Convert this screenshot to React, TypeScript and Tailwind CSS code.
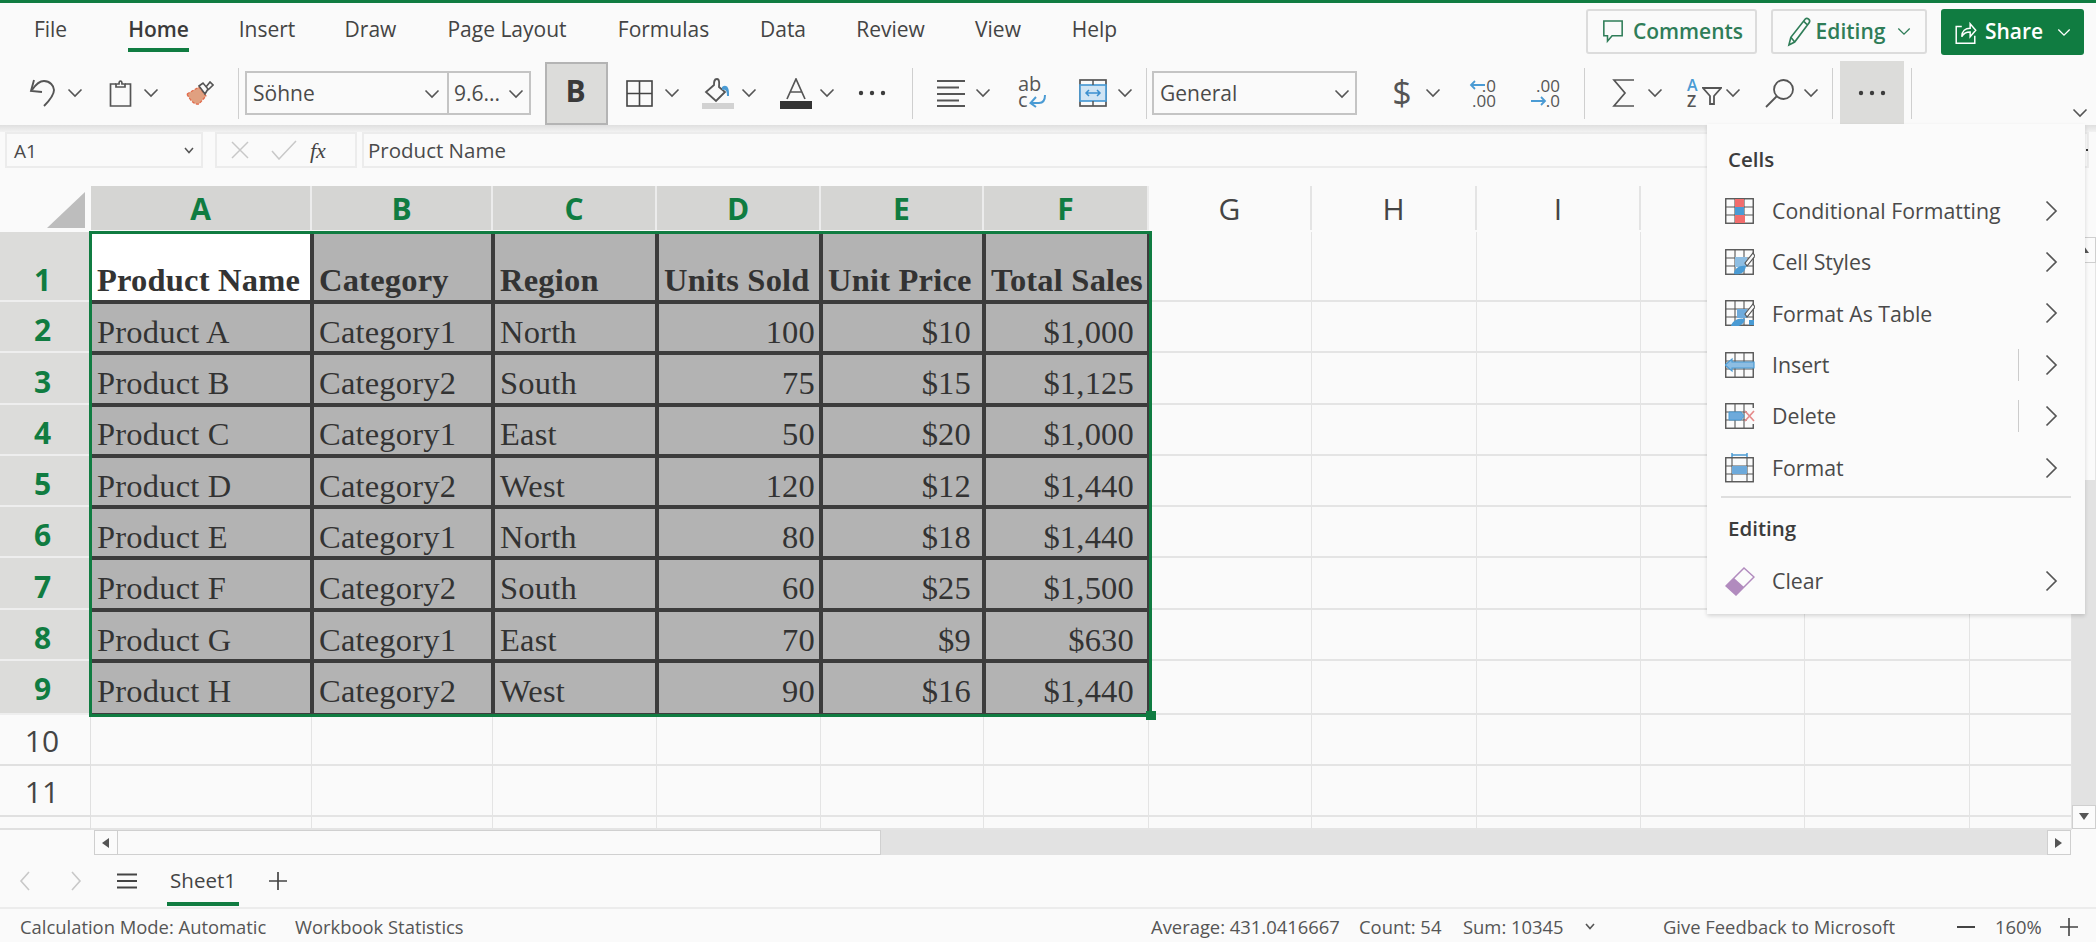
import { Fragment } from 'react';

const tabs = [
  { label: 'File', w: 'w-[84px] mr-[10px]' },
  { label: 'Home', w: 'w-[112px]', active: true },
  { label: 'Insert', w: 'w-[105px]' },
  { label: 'Draw', w: 'w-[102px]' },
  { label: 'Page Layout', w: 'w-[171px]' },
  { label: 'Formulas', w: 'w-[142px]' },
  { label: 'Data', w: 'w-[97px]' },
  { label: 'Review', w: 'w-[118px]' },
  { label: 'View', w: 'w-[97px]' },
  { label: 'Help', w: 'w-[96px]' },
];

const header = ['Product Name', 'Category', 'Region', 'Units Sold', 'Unit Price', 'Total Sales'];
const rows = [
  ['Product A', 'Category1', 'North', '100', '$10', '$1,000'],
  ['Product B', 'Category2', 'South', '75', '$15', '$1,125'],
  ['Product C', 'Category1', 'East', '50', '$20', '$1,000'],
  ['Product D', 'Category2', 'West', '120', '$12', '$1,440'],
  ['Product E', 'Category1', 'North', '80', '$18', '$1,440'],
  ['Product F', 'Category2', 'South', '60', '$25', '$1,500'],
  ['Product G', 'Category1', 'East', '70', '$9', '$630'],
  ['Product H', 'Category2', 'West', '90', '$16', '$1,440'],
];
const colLetters = ['A', 'B', 'C', 'D', 'E', 'F', 'G', 'H', 'I', 'J', 'K', 'L'];

function Chev({ className = '' }: { className?: string }) {
  return (
    <svg viewBox="0 0 16 10" className={`w-[16px] h-[10px] shrink-0 ${className}`} fill="none" stroke="#555" strokeWidth="1.6">
      <polyline points="1.5,1.5 8,8 14.5,1.5" />
    </svg>
  );
}

function Sep({ className = '' }: { className?: string }) {
  return <div className={`w-px h-[51px] bg-[#cfcfcf] shrink-0 ${className}`} />;
}

function Dots({ className = '' }: { className?: string }) {
  return (
    <svg viewBox="0 0 28 6" className={`w-[28px] h-[6px] shrink-0 ${className}`} fill="#3c3c3c">
      <circle cx="3" cy="3" r="2.2" />
      <circle cx="14" cy="3" r="2.2" />
      <circle cx="25" cy="3" r="2.2" />
    </svg>
  );
}

function MenuGrid({ children }: { children?: React.ReactNode }) {
  return (
    <svg viewBox="0 0 30 26" className="w-[30px] h-[26px] shrink-0" fill="none">
      <rect x="0.75" y="0.75" width="27.5" height="24.5" stroke="#555" strokeWidth="1.4" />
      <path d="M10 1v24M19 1v24M1 9h27M1 17h27" stroke="#555" strokeWidth="1.1" />
      {children}
    </svg>
  );
}

function MenuItem({ icon, label, split }: { icon: React.ReactNode; label: string; split?: boolean }) {
  return (
    <div className="flex items-center h-[51.4px] pl-[18px]">
      <div className="w-[30px] flex justify-center">{icon}</div>
      <span className="ml-[17px] text-[#4a4a4a]">{label}</span>
      {split && <div className="ml-auto w-px h-[32px] bg-[#cccccc]" />}
      <svg viewBox="0 0 13 22" className={`w-[13px] h-[22px] mr-[27px] ${split ? 'ml-[26px]' : 'ml-auto'}`} fill="none" stroke="#555" strokeWidth="1.7">
        <polyline points="1.5,1.5 11,11 1.5,20.5" />
      </svg>
    </div>
  );
}

function ScrollBtn({ dir, className = '' }: { dir: 'up' | 'down' | 'left' | 'right'; className?: string }) {
  const points = { up: '1,9 6,2 11,9', down: '1,2 6,9 11,2', left: '9,1 2,6 9,11', right: '2,1 9,6 2,11' }[dir];
  return (
    <div className={`flex items-center justify-center bg-[#fbfbfb] border border-[#cfcfcf] shrink-0 ${className}`}>
      <svg viewBox="0 0 12 12" className="w-[12px] h-[12px]" fill="#555">
        <polygon points={points} />
      </svg>
    </div>
  );
}

export default function App() {
  return (
    <div className="relative w-[2096px] h-[942px] overflow-hidden flex flex-col bg-[#fafafa] text-[#444] font-['Open_Sans',sans-serif]">
      <div className="h-[3px] bg-[#107c41] shrink-0" />

      {/* tab row */}
      <div className="h-[58px] flex items-start pl-[8.5px] shrink-0 text-[21px]">
        {tabs.map((t) => (
          <div key={t.label} className={`${t.w} flex justify-center`}>
            <span className={`h-[49px] leading-[52px] border-b-[4px] whitespace-nowrap ${t.active ? 'border-[#107c41] font-semibold text-[#3a3a3a]' : 'border-transparent'}`}>
              {t.label}
            </span>
          </div>
        ))}
        <div className="ml-auto mr-[12px] mt-[6px] flex gap-[14px]">
          <div className="h-[45px] w-[171px] flex items-center justify-center gap-[9px] pl-[2px] border-2 border-[#dcdcdc] rounded-[3px] text-[#2f7d58] font-semibold">
            <svg viewBox="0 0 24 28" className="w-[22px] h-[26px]" fill="none" stroke="#2f7d58" strokeWidth="1.7">
              <path d="M2 2h20v16H11l-5 6v-6H2z" />
            </svg>
            Comments
          </div>
          <div className="h-[45px] w-[156px] flex items-center justify-center gap-[4px] border-2 border-[#dcdcdc] rounded-[3px] text-[#2f7d58] font-semibold">
            <svg viewBox="0 0 26 32" className="w-[25px] h-[31px]" fill="none" stroke="#2f7d58" strokeWidth="1.7">
              <path d="M2 30l2-8L19 3c2-2 6 1 4 4L8 27z M4 22l4 5M17 5l4 4" />
            </svg>
            Editing
            <svg viewBox="0 0 16 10" className="w-[14px] h-[9px] ml-[8px]" fill="none" stroke="#2f7d58" strokeWidth="1.5">
              <polyline points="1.5,1.5 8,8 14.5,1.5" />
            </svg>
          </div>
          <div className="h-[46px] w-[143px] flex items-center justify-center gap-[8px] rounded-[3px] bg-[#107c41] text-white font-semibold">
            <svg viewBox="0 0 24 28" className="w-[23px] h-[26px]" fill="none" stroke="#fff" strokeWidth="1.6">
              <path d="M8 8H2v18h20v-8M8 19c0-6 4-9 9-9V5l6 7-6 7v-5c-4 0-7 1-9 5z" />
            </svg>
            Share
            <svg viewBox="0 0 16 10" className="w-[14px] h-[9px] ml-[6px]" fill="none" stroke="#fff" strokeWidth="1.5">
              <polyline points="1.5,1.5 8,8 14.5,1.5" />
            </svg>
          </div>
        </div>
      </div>

      {/* toolbar */}
      <div className="h-[64px] flex items-center pl-[29px] shrink-0 text-[21px]">
        <svg viewBox="0 0 28 30" className="w-[28px] h-[30px] shrink-0" fill="none" stroke="#555" strokeWidth="1.9">
          <path d="M5 2L2 13l11 1" />
          <path d="M3 12C7 6 11 3 15 3c6 0 10 5 10 9 0 5-5 11-10 16" />
        </svg>
        <Chev className="ml-[10px]" />
        <svg viewBox="0 0 23 28" className="w-[23px] h-[28px] ml-[26px] shrink-0" fill="none" stroke="#555" strokeWidth="1.7">
          <path d="M7 5H1.5v22h20V5H16" />
          <path d="M7 8V5h3c0-4 3-4 3 0h3v3z" />
        </svg>
        <Chev className="ml-[11px]" />
        <svg viewBox="0 0 28 24" className="w-[28px] h-[24px] ml-[27px] shrink-0">
          <path d="M1 13l12-7 7 9-7 8c-5 1-9-4-12-10z" fill="#e0a080" stroke="#e2694a" strokeWidth="1.3" strokeDasharray="3 1.5" />
          <path d="M13 5l4-3 5 6-3 5zM20 6l4-5 3 3-5 5" fill="#fafafa" stroke="#555" strokeWidth="1.6" />
        </svg>
        <Sep className="ml-[24px]" />
        <div className="ml-[6px] flex h-[44px] border-2 border-[#c4c4c4] shrink-0 text-[#4a4a4a]">
          <div className="w-[202px] flex items-center pl-[6px] pr-[7px] pt-[2px] border-r-2 border-[#c4c4c4]">
            Söhne
            <Chev className="ml-auto" />
          </div>
          <div className="w-[80px] flex items-center pl-[5px] pr-[5px] pt-[2px]">
            9.6...
            <Chev className="ml-auto" />
          </div>
        </div>
        <div className="ml-[14px] w-[63px] h-[63px] flex items-center justify-center pb-[5px] pr-[2px] bg-[#dcdcda] border-2 border-[#b4b4b4] text-[30px] font-bold text-[#3a3a3a] shrink-0">
          B
        </div>
        <svg viewBox="0 0 27 27" className="w-[27px] h-[27px] ml-[18px] shrink-0" fill="none" stroke="#444" strokeWidth="1.6">
          <rect x="1" y="1" width="25" height="25" />
          <path d="M13.5 1v25M1 13.5h25" />
        </svg>
        <Chev className="ml-[11px]" />
        <svg viewBox="0 0 32 31" className="w-[32px] h-[31px] ml-[22px] shrink-0">
          <path d="M15 1c3 0 2 6 2 8l6 5-9 9-10-9 8-7c0-3 0-6 3-6z" fill="none" stroke="#555" strokeWidth="1.8" />
          <path d="M20 9c4-3 7 0 7 6v3h-2c0-5-1-7-5-6z" fill="#4a9bd4" />
          <rect x="0" y="25" width="32" height="6" fill="#d2d2d2" />
        </svg>
        <Chev className="ml-[7px]" />
        <svg viewBox="0 0 32 31" className="w-[32px] h-[31px] ml-[23px] shrink-0">
          <path d="M7 21L16 1l9 20M10 14h12" fill="none" stroke="#555" strokeWidth="1.7" />
          <rect x="0" y="23" width="32" height="8" fill="#333" />
        </svg>
        <Chev className="ml-[7px]" />
        <Dots className="ml-[23px]" />
        <Sep className="ml-[26px]" />
        <svg viewBox="0 0 28 28" className="w-[28px] h-[28px] ml-[24px] shrink-0" fill="none" stroke="#555" strokeWidth="2">
          <path d="M0 2h28M0 8.5h22M0 15h28M0 21.5h22M0 27h28" />
        </svg>
        <Chev className="ml-[10px]" />
        <div className="ml-[27px] w-[28px] h-[34px] relative shrink-0 leading-[16px] text-[20px] text-[#555]">
          <div>ab</div>
          <div>c</div>
          <svg viewBox="0 0 18 14" className="absolute left-[11px] top-[18px] w-[18px] h-[14px]" fill="none" stroke="#4a9bd4" strokeWidth="2">
            <path d="M16 1c0 6-3 8-6 8H2M7 3L1.5 9 7 13" />
          </svg>
        </div>
        <svg viewBox="0 0 28 28" className="w-[28px] h-[28px] ml-[33px] shrink-0" fill="none">
          <rect x="1" y="1" width="26" height="26" stroke="#555" strokeWidth="1.7" />
          <rect x="1" y="6" width="26" height="16" fill="#cfe4f4" stroke="#4a9bd4" strokeWidth="1.7" />
          <path d="M14 1v5M14 22v5" stroke="#555" strokeWidth="1.5" />
          <path d="M7 14h14M10 11l-3 3 3 3M18 11l3 3-3 3" stroke="#3b8fcf" strokeWidth="1.5" />
        </svg>
        <Chev className="ml-[10px]" />
        <Sep className="ml-[13px]" />
        <div className="ml-[5px] w-[205px] h-[44px] flex items-center pl-[6px] pr-[5px] pt-[2px] border-2 border-[#c4c4c4] shrink-0 text-[#4a4a4a]">
          General
          <Chev className="ml-auto" />
        </div>
        <span className="ml-[38px] w-[14px] flex justify-center text-[34px] leading-none shrink-0 text-[#555] pb-[3px]">$</span>
        <Chev className="ml-[16px]" />
        <div className="ml-[28px] w-[27px] shrink-0 leading-[15px] text-[17px] text-right text-[#555] relative h-[30px]">
          <div>.0</div>
          <div>.00</div>
          <svg viewBox="0 0 16 10" className="absolute left-0 top-[2px] w-[16px] h-[10px]" fill="none" stroke="#4a9bd4" strokeWidth="1.8">
            <path d="M16 5H2M6 1L2 5l4 4" />
          </svg>
        </div>
        <div className="ml-[35px] w-[29px] shrink-0 leading-[15px] text-[17px] text-right text-[#555] relative h-[30px]">
          <div>.00</div>
          <div>.0</div>
          <svg viewBox="0 0 16 10" className="absolute left-0 top-[18px] w-[16px] h-[10px]" fill="none" stroke="#4a9bd4" strokeWidth="1.8">
            <path d="M0 5h14M10 1l4 4-4 4" />
          </svg>
        </div>
        <Sep className="ml-[24px]" />
        <svg viewBox="0 0 23 28" className="w-[23px] h-[28px] ml-[27px] shrink-0" fill="none" stroke="#555" strokeWidth="1.7">
          <path d="M22 1H2l11 13L2 27h20" />
        </svg>
        <Chev className="ml-[12px]" />
        <div className="ml-[24px] w-[35px] h-[32px] relative shrink-0 font-semibold text-[16px] leading-[16px]">
          <div className="text-[#4a9bd4]">A</div>
          <div className="text-[#555]">Z</div>
          <svg viewBox="0 0 20 20" className="absolute left-[15px] top-[9px] w-[20px] h-[20px]" fill="none" stroke="#555" strokeWidth="1.8">
            <path d="M1 2h18l-7 8v8H8v-8z" />
          </svg>
        </div>
        <Chev className="ml-[3px]" />
        <svg viewBox="0 0 29 29" className="w-[29px] h-[29px] ml-[24px] shrink-0" fill="none" stroke="#555" strokeWidth="1.8">
          <circle cx="18.5" cy="10.5" r="9.5" />
          <path d="M11.5 17.5L1 28" />
        </svg>
        <Chev className="ml-[9px]" />
        <Sep className="ml-[13px]" />
        <div className="ml-[7px] w-[64px] h-[64px] flex items-center justify-center bg-[#dcdcda] shrink-0">
          <Dots />
        </div>
        <Sep className="ml-[7px]" />
        <Chev className="ml-auto mr-[8px] self-end mb-[7px]" />
      </div>
      <div className="h-[7px] shrink-0 bg-gradient-to-b from-[#dfdfdf] to-[#f2f2f2]" />

      {/* formula bar */}
      <div className="h-[36px] shrink-0 flex pl-[5px] text-[20.5px]">
        <div className="w-[198px] flex items-center pl-[7px] pr-[7px] border-2 border-[#ececec] text-[#4a4a4a]">
          <span className="text-[19px] mt-[3px]">A1</span>
          <svg viewBox="0 0 10 7" className="w-[10px] h-[7px] ml-auto" fill="none" stroke="#555" strokeWidth="1.5">
            <polyline points="1,1 5,5.5 9,1" />
          </svg>
        </div>
        <div className="ml-[12px] w-[142px] flex items-center pl-[13px] border-2 border-[#ececec]">
          <svg viewBox="0 0 20 20" className="w-[20px] h-[20px]" fill="none" stroke="#c8c8c8" strokeWidth="1.5">
            <path d="M2 2l16 16M18 2L2 18" />
          </svg>
          <svg viewBox="0 0 26 20" className="w-[26px] h-[20px] ml-[21px]" fill="none" stroke="#c8c8c8" strokeWidth="1.5">
            <path d="M1 11l7 8L25 1" />
          </svg>
          <span className="ml-[13px] font-['Liberation_Serif',serif] italic text-[22px] text-[#444]">fx</span>
        </div>
        <div className="ml-[5px] w-[1727px] flex items-center pl-[4px] border-2 border-[#ececec] text-[#4a4a4a]">
          Product Name
        </div>
      </div>
      <div className="h-[18px] shrink-0" />

      {/* sheet */}
      <div className="relative h-[644px] shrink-0 flex">
        <div className="w-[2072px] grid grid-cols-[91px_221px_181px_164px_164px_163px_165px_163px_165px_164px_164px_165px_102px] grid-rows-[46px_70px_repeat(7,51.3px)_54px_51px_51px_13px]">
          <div className="relative">
            <svg viewBox="0 0 38 36" className="absolute left-[47px] top-[6px] w-[38px] h-[36px]">
              <polygon points="38,0 38,36 0,36" fill="#bdbdbd" />
            </svg>
          </div>
          {colLetters.map((c, i) => (
            <div
              key={c}
              className={`flex items-center justify-center h-[44px] pt-[2px] text-[30px] leading-none border-r-2 ${
                i < 6 ? 'bg-[#d5d5d3] text-[#107c41] font-bold border-[#ececec]' : 'text-[#444] border-[#e4e4e4]'
              }`}
            >
              {c}
            </div>
          ))}

          {/* row 1 */}
          <div className="flex items-end justify-center bg-[#dcdcda] border-b-2 border-[#eeeeee] text-[#107c41] font-bold text-[30px] leading-none pb-[5px] pr-[6px]">1</div>
          {header.map((h, i) => (
            <div
              key={h}
              className={`flex items-end pb-[4px] whitespace-nowrap font-['Liberation_Serif',serif] font-bold text-[32.5px] tracking-[0.2px] leading-none text-[#333] border-x-2 border-b-2 border-[#3c3c3c] ${
                i === 0 ? 'bg-white pl-[6px] border-l-0' : 'bg-[#b3b3b3] pl-[5px]'
              }`}
            >
              {h}
            </div>
          ))}
          {colLetters.slice(6).map((c) => (
            <div key={c} className="border-r border-b-2 border-[#e4e4e4]" />
          ))}

          {/* data rows */}
          {rows.map((row, r) => (
            <Fragment key={row[0]}>
              <div className={`flex items-end justify-center bg-[#dcdcda] border-b-2 border-[#eeeeee] text-[#107c41] font-bold text-[30px] leading-none pr-[6px] ${r === 7 ? 'pb-[9px]' : 'pb-[6px]'}`}>
                {r + 2}
              </div>
              {row.map((v, i) => (
                <div
                  key={i}
                  className={`flex items-end whitespace-nowrap font-['Liberation_Serif',serif] text-[32.5px] tracking-[0.2px] leading-none text-[#333] bg-[#b3b3b3] border-2 border-[#3c3c3c] ${r === 7 ? 'pb-[6px]' : 'pb-[3px]'} ${
                    i === 0 ? 'pl-[6px] border-l-0' : i < 3 ? 'pl-[5px]' : i === 3 ? 'justify-end pr-[4px]' : i === 4 ? 'justify-end pr-[11px]' : 'justify-end pr-[13px]'
                  }`}
                >
                  {v}
                </div>
              ))}
              {colLetters.slice(6).map((c) => (
                <div key={c} className="border-r border-b-2 border-[#e4e4e4]" />
              ))}
            </Fragment>
          ))}

          {/* rows 10-12 */}
          {['10', '11', ''].map((n) => (
            <Fragment key={n}>
              <div className="flex items-end justify-center pr-[6px] pb-[8px] text-[30px] leading-none border-r border-b-2 border-[#e0e0e0]">{n}</div>
              {colLetters.map((c) => (
                <div key={c} className="border-r border-b-2 border-[#e4e4e4]" />
              ))}
            </Fragment>
          ))}
        </div>

        {/* vertical scrollbar */}
        <div className="w-[24px] flex flex-col pt-[51px]">
          <ScrollBtn dir="up" className="h-[26px]" />
          <div className="h-[217px] border-x border-[#e4e4e4]" />
          <div className="flex-1 bg-[#e2e2e2]" />
          <ScrollBtn dir="down" className="h-[24px]" />
          <div className="h-[1px]" />
        </div>

        {/* selection outline */}
        <div className="absolute left-[89px] top-[45px] w-[1063px] h-[486px] border-[3px] border-[#107c41] pointer-events-none" />
        <div className="absolute left-[1146px] top-[525px] w-[10px] h-[9px] bg-[#107c41]" />
      </div>

      {/* horizontal scrollbar */}
      <div className="h-[25px] shrink-0 flex pl-[94px] pr-[25px]">
        <ScrollBtn dir="left" className="w-[24px]" />
        <div className="w-[763px] border-y border-r border-[#d0d0d0]" />
        <div className="flex-1 bg-[#e2e2e2]" />
        <ScrollBtn dir="right" className="w-[24px]" />
      </div>

      {/* sheet tabs */}
      <div className="h-[52px] shrink-0 flex items-start pl-[19px] text-[20.5px]">
        <svg viewBox="0 0 12 20" className="w-[12px] h-[20px] mt-[16px]" fill="none" stroke="#c8c8c8" strokeWidth="1.6">
          <polyline points="10,1 2,10 10,19" />
        </svg>
        <svg viewBox="0 0 12 20" className="w-[12px] h-[20px] mt-[16px] ml-[39px]" fill="none" stroke="#c8c8c8" strokeWidth="1.6">
          <polyline points="2,1 10,10 2,19" />
        </svg>
        <svg viewBox="0 0 20 16" className="w-[20px] h-[16px] mt-[18px] ml-[35px]" fill="none" stroke="#444" strokeWidth="2">
          <path d="M0 1.5h20M0 8h20M0 14.5h20" />
        </svg>
        <div className="ml-[30px] w-[72px] h-[51px] flex justify-center border-b-[4px] border-[#107c41]">
          <span className="leading-[51px] font-medium whitespace-nowrap">Sheet1</span>
        </div>
        <svg viewBox="0 0 18 18" className="w-[18px] h-[18px] mt-[17px] ml-[30px]" fill="none" stroke="#444" strokeWidth="1.7">
          <path d="M9 0v18M0 9h18" />
        </svg>
      </div>

      {/* status bar */}
      <div className="h-[35px] shrink-0 flex items-center pt-[2px] border-t-2 border-[#ececec] text-[18.4px] text-[#555] whitespace-nowrap">
        <span className="ml-[20px] w-[275px]">Calculation Mode: Automatic</span>
        <span className="w-[856px]">Workbook Statistics</span>
        <span className="w-[208px]">Average: 431.0416667</span>
        <span className="w-[104px]">Count: 54</span>
        <span className="w-[122px]">Sum: 10345</span>
        <svg viewBox="0 0 10 7" className="w-[10px] h-[7px]" fill="none" stroke="#555" strokeWidth="1.6">
          <polyline points="1,1 5,5.5 9,1" />
        </svg>
        <span className="ml-[68px] w-[294px]">Give Feedback to Microsoft</span>
        <svg viewBox="0 0 18 2" className="w-[18px] h-[2px]" fill="#444">
          <rect width="18" height="2" />
        </svg>
        <span className="ml-[20px] w-[65px]">160%</span>
        <svg viewBox="0 0 18 18" className="w-[18px] h-[18px]" fill="none" stroke="#444" strokeWidth="1.6">
          <path d="M9 0v18M0 9h18" />
        </svg>
      </div>

      {/* overflow menu */}
      <div className="absolute left-[1707px] top-[124px] w-[378px] h-[490px] bg-[#fbfbfb] shadow-[0_2px_4px_rgba(0,0,0,0.15)] text-[21.3px]">
        <div className="h-[61px] flex items-center pl-[21px] pt-[9px] font-semibold text-[20.5px] text-[#3c3c3c]">Cells</div>
        <MenuItem
          label="Conditional Formatting"
          icon={
            <MenuGrid>
              <rect x="10" y="1" width="9" height="8" fill="#f26d6d" />
              <rect x="10" y="9" width="9" height="8" fill="#4a9bd4" />
              <rect x="10" y="17" width="10" height="8" fill="#f26d6d" />
            </MenuGrid>
          }
        />
        <MenuItem
          label="Cell Styles"
          icon={
            <MenuGrid>
              <rect x="10" y="8" width="12" height="10" fill="#8dbde2" />
              <path d="M20 14l8-10 2 3-8 10z" fill="#fafafa" stroke="#555" strokeWidth="1.2" />
              <path d="M9 25c0-6 6-9 12-8-1 7-6 9-12 8z" fill="#4a9bd4" />
            </MenuGrid>
          }
        />
        <MenuItem
          label="Format As Table"
          icon={
            <MenuGrid>
              <rect x="12" y="9" width="10" height="9" fill="#6eaadb" />
              <path d="M20 14l8-10 2 3-8 10z" fill="#fafafa" stroke="#555" strokeWidth="1.2" />
              <path d="M6 26c1-5 8-9 14-7-1 6-8 9-14 7z" fill="#4a9bd4" />
              <rect x="24" y="20" width="5" height="5" fill="#4a9bd4" />
            </MenuGrid>
          }
        />
        <MenuItem
          label="Insert"
          split
          icon={
            <MenuGrid>
              <path d="M0 13l7-6v3h22v6H7v3z" fill="#8dbde2" stroke="#4a9bd4" strokeWidth="1.2" />
            </MenuGrid>
          }
        />
        <MenuItem
          label="Delete"
          split
          icon={
            <MenuGrid>
              <rect x="22" y="5" width="8" height="16" fill="#fafafa" />
              <path d="M4 9h12l3 4-3 4H4z" fill="#6eaadb" stroke="#4a9bd4" strokeWidth="1" />
              <path d="M20 8l9 10M29 8l-9 10" stroke="#e58a8a" strokeWidth="1.7" />
            </MenuGrid>
          }
        />
        <MenuItem
          label="Format"
          icon={
            <svg viewBox="0 0 30 30" className="w-[30px] h-[30px] shrink-0" fill="none">
              <path d="M7 2h15M7 0v4M22 0v4" stroke="#4a9bd4" strokeWidth="1.5" />
              <rect x="0.75" y="4.75" width="27.5" height="24" stroke="#555" strokeWidth="1.4" />
              <path d="M7 5v24M22 5v24M1 13h27M1 21h27" stroke="#555" strokeWidth="1.1" />
              <rect x="7" y="13" width="15" height="8" fill="#6eaadb" />
            </svg>
          }
        />
        <div className="mx-[14px] mt-[3px] h-[2px] bg-[#dedede]" />
        <div className="h-[57px] flex items-center pl-[21px] pt-[3px] font-semibold text-[20.5px] text-[#3c3c3c]">Editing</div>
        <MenuItem
          label="Clear"
          icon={
            <svg viewBox="0 0 30 30" className="w-[30px] h-[30px] shrink-0">
              <path d="M1 20L19 2l10 9L11 29z" fill="none" stroke="#b18bbe" strokeWidth="1.5" />
              <path d="M1 20l8-8 10 9-8 8z" fill="#b18bbe" />
            </svg>
          }
        />
      </div>
      <div className="absolute left-[2085px] top-[132px] w-[4px] h-[36px] flex items-center justify-center">
        <div className="w-[2px] h-[2px] bg-[#333]" />
      </div>
    </div>
  );
}
